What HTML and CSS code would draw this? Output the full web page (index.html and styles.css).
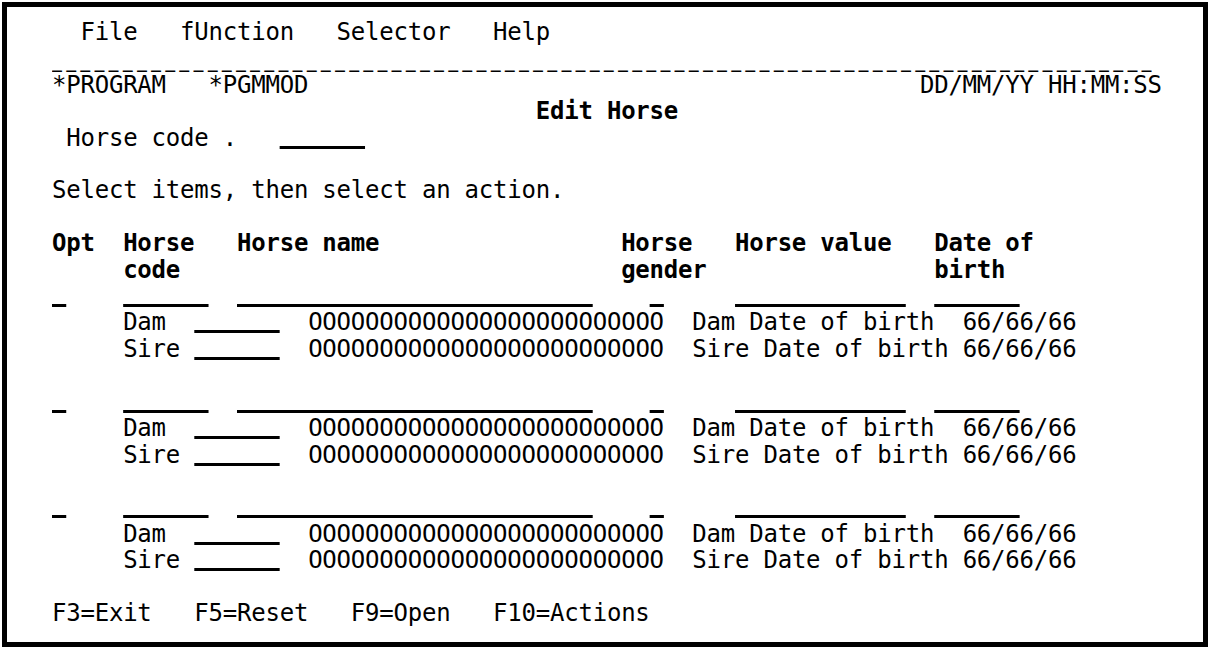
FILE: index.html
```html
<!DOCTYPE html>
<html lang="en">
<head>
<meta charset="utf-8">
<title>Edit Horse</title>
<link rel="stylesheet" href="styles.css">
</head>
<body>
<div class="screen">
<div class="row">  File   fUnction   Selector   Help</div>
<div class="row"><span class="rule"><span class="dash">__________</span><span class="dash">__________</span><span class="dash">__________</span><span class="dash">__________</span><span class="dash">__________</span><span class="dash">__________</span><span class="dash">__________</span><span class="dash">________</span></span></div>
<div class="row">*PROGRAM   *PGMMOD                                           DD/MM/YY HH:MM:SS</div>
<div class="row">                                  <b class="hi">Edit Horse</b></div>
<div class="row"> Horse code .   <span class="fld">      </span></div>
<div class="row"> </div>
<div class="row">Select items, then select an action.</div>
<div class="row"> </div>
<div class="row hi">Opt  Horse   Horse name                 Horse   Horse value   Date of</div>
<div class="row hi">     code                               gender                birth</div>
<div class="row"><span class="fld"> </span>    <span class="fld">      </span>  <span class="fld">                         </span>    <span class="fld"> </span>     <span class="fld">            </span>  <span class="fld">      </span></div>
<div class="row">     Dam  <span class="fld">      </span>  OOOOOOOOOOOOOOOOOOOOOOOOO  Dam Date of birth  66/66/66</div>
<div class="row">     Sire <span class="fld">      </span>  OOOOOOOOOOOOOOOOOOOOOOOOO  Sire Date of birth 66/66/66</div>
<div class="row"> </div>
<div class="row"><span class="fld"> </span>    <span class="fld">      </span>  <span class="fld">                         </span>    <span class="fld"> </span>     <span class="fld">            </span>  <span class="fld">      </span></div>
<div class="row">     Dam  <span class="fld">      </span>  OOOOOOOOOOOOOOOOOOOOOOOOO  Dam Date of birth  66/66/66</div>
<div class="row">     Sire <span class="fld">      </span>  OOOOOOOOOOOOOOOOOOOOOOOOO  Sire Date of birth 66/66/66</div>
<div class="row"> </div>
<div class="row"><span class="fld"> </span>    <span class="fld">      </span>  <span class="fld">                         </span>    <span class="fld"> </span>     <span class="fld">            </span>  <span class="fld">      </span></div>
<div class="row">     Dam  <span class="fld">      </span>  OOOOOOOOOOOOOOOOOOOOOOOOO  Dam Date of birth  66/66/66</div>
<div class="row">     Sire <span class="fld">      </span>  OOOOOOOOOOOOOOOOOOOOOOOOO  Sire Date of birth 66/66/66</div>
<div class="row"> </div>
<div class="row">F3=Exit   F5=Reset   F9=Open   F10=Actions</div>
</div>
</body>
</html>
```
FILE: styles.css
```css
html, body {
  margin: 0;
  padding: 0;
  background: #ffffff;
}

body {
  padding: 2px;
}

.screen {
  box-sizing: border-box;
  width: 1206px;
  height: 645px;
  border: 5px solid #000000;
  padding: 12px 0 0 45px;
  background: #ffffff;
  color: #000000;
  font-family: "DejaVu Sans Mono", "Liberation Mono", monospace;
  font-size: 24px;
  letter-spacing: -0.221px;
  overflow: hidden;
}

.row {
  height: 26.41px;
  line-height: 26.41px;
  white-space: pre;
}

.hi {
  font-weight: bold;
}

.fld {
  text-decoration: underline;
  text-decoration-thickness: 3px;
  text-underline-offset: 0px;
  text-decoration-skip-ink: none;
}

.rule {
  display: inline-block;
  width: 1110px;
  height: 30px;
  overflow: hidden;
  vertical-align: top;
}

.dash {
  font-size: 16.61px;
  font-weight: bold;
  letter-spacing: 4.15px;
  vertical-align: -2px;
}
```
